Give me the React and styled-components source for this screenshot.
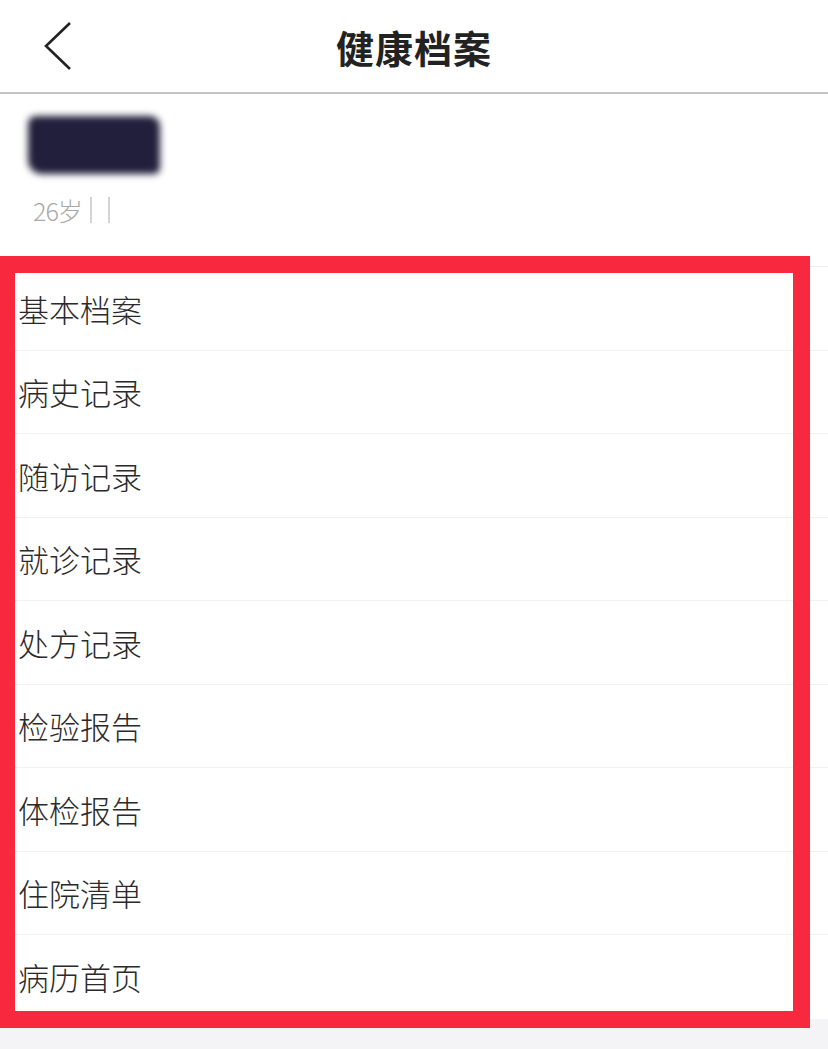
import React from 'react'
import styled, { createGlobalStyle } from 'styled-components'

const GlobalStyle = createGlobalStyle`
  body {
    margin: 0;
    background-color: #f4f4f6;
    font-family: "Noto Sans CJK SC", "Noto Sans", sans-serif;
  }
`

const Page = styled.div`
  position: relative;
  width: 828px;
  min-height: 1049px;
  background-color: #f4f4f6;
  overflow: hidden;
`

const Header = styled.header`
  display: grid;
  grid-template-columns: 120px 1fr 120px;
  align-items: center;
  height: 92px;
  background-color: #fff;
  border-bottom: 2px solid #c4c4c4;
`

const BackButton = styled.button`
  display: flex;
  align-items: center;
  padding: 0 0 0 44px;
  border: none;
  background: none;
  height: 100%;
`

const Title = styled.h1`
  margin: 0;
  text-align: center;
  font-size: 38px;
  font-weight: 700;
  color: #222;
  letter-spacing: 1px;
`

const Profile = styled.section`
  display: flex;
  flex-direction: column;
  gap: 18px;
  padding: 22px 28px 0;
  height: 150px;
  background-color: #fff;
  border-bottom: 1px solid #ececec;
`

const HiddenName = styled.div`
  width: 132px;
  height: 58px;
  border-radius: 8px 10px 6px 14px;
  background-color: #211f3b;
  filter: blur(3.5px);
`

const Meta = styled.div`
  display: flex;
  align-items: center;
  padding-left: 5px;
  font-size: 25px;
  font-weight: 300;
  color: #a8a8a8;
  letter-spacing: -1px;
`

const Pipe = styled.span`
  width: 2px;
  height: 26px;
  margin-left: ${props => props.offset}px;
  background-color: #d4d4d4;
`

const List = styled.ul`
  margin: 0;
  padding: 0;
  list-style: none;
  background-color: #fff;
`

const Item = styled.li`
  display: flex;
  align-items: center;
  justify-content: space-between;
  box-sizing: border-box;
  height: 83.5px;
  padding: 0 26px 0 18px;
  border-bottom: ${props => (props.last ? 'none' : '1px solid #f1f1f1')};
  font-size: 31px;
  font-weight: 300;
  color: #2a2a2a;
`

const Highlight = styled.div`
  position: absolute;
  top: 256px;
  left: -2px;
  width: 812px;
  height: 772px;
  box-sizing: border-box;
  border: 17px solid #f8283f;
  pointer-events: none;
`

const items = [
  '基本档案',
  '病史记录',
  '随访记录',
  '就诊记录',
  '处方记录',
  '检验报告',
  '体检报告',
  '住院清单',
  '病历首页',
]

const Chevron = ({ color = '#222', width = 28, height = 50, stroke = 2.6 }) => (
  <svg width={width} height={height} viewBox={`0 0 ${width} ${height}`} fill="none">
    <polyline
      points={`${width - 2},2 2,${height / 2} ${width - 2},${height - 2}`}
      stroke={color}
      strokeWidth={stroke}
    />
  </svg>
)

const RightArrow = () => (
  <svg width="10" height="20" viewBox="0 0 10 20" fill="none">
    <polyline points="1,1 9,10 1,19" stroke="#e2e2e2" strokeWidth="1.6" />
  </svg>
)

export default function App() {
  return (
    <Page>
      <GlobalStyle />
      <Header>
        <BackButton aria-label="返回">
          <Chevron />
        </BackButton>
        <Title>健康档案</Title>
        <div />
      </Header>
      <Profile>
        <HiddenName />
        <Meta>
          <span>26岁</span>
          <Pipe offset={8} />
          <Pipe offset={16} />
        </Meta>
      </Profile>
      <List>
        {items.map((label, i) => (
          <Item key={label} last={i === items.length - 1}>
            {label}
            <RightArrow />
          </Item>
        ))}
      </List>
      <Highlight />
    </Page>
  )
}
